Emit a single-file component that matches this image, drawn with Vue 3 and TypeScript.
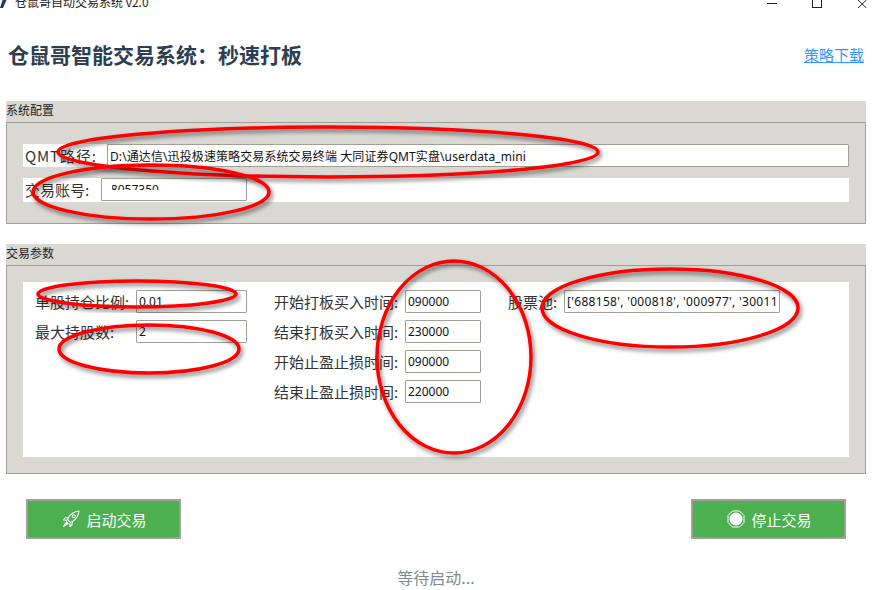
<script setup lang="ts">
import { ref } from 'vue'
const qmtPath = ref('D:\\通达信\\迅投极速策略交易系统交易终端 大同证券QMT实盘\\userdata_mini')
const leftParams = [
  { label: '单股持仓比例:', value: '0.01' },
  { label: '最大持股数:', value: '2' },
]
const timeParams = [
  { label: '开始打板买入时间:', value: '090000' },
  { label: '结束打板买入时间:', value: '230000' },
  { label: '开始止盈止损时间:', value: '090000' },
  { label: '结束止盈止损时间:', value: '220000' },
]
const pool = "['688158', '000818', '000977', '300115', '002230']"
const marks = [
  { cx: 328, cy: 152, rx: 270, ry: 25 },
  { cx: 151, cy: 192, rx: 118, ry: 27 },
  { cx: 137, cy: 294, rx: 99, ry: 13 },
  { cx: 149, cy: 349, rx: 90, ry: 24 },
  { cx: 454, cy: 357, rx: 77, ry: 96 },
  { cx: 670, cy: 308, rx: 128, ry: 39 },
]
</script>

<template>
  <div class="page">
    <header class="titlebar">
      <svg class="app-icon" width="7" height="8" viewBox="0 0 7 8"><path d="M0 8 L2.5 0 H6.5 L3 8 Z" fill="#1e3a5f" /></svg>
      <span class="app-name">仓鼠哥自动交易系统 v2.0</span>
      <div class="win-ctrls">
        <span class="ctrl min"></span>
        <span class="ctrl max"></span>
        <svg class="ctrl-x" width="11" height="8" viewBox="0 0 11 8"><path d="M1 0 L9.5 8 M9.5 0 L1 8" stroke="#222" stroke-width="1" fill="none" /></svg>
      </div>
    </header>

    <div class="heading">
      <h1>仓鼠哥智能交易系统：秒速打板</h1>
      <a class="link">策略下载</a>
    </div>

    <section class="group config">
      <div class="group-title">系统配置</div>
      <div class="group-box">
        <div class="row-qmt">
          <label class="lbl-qmt">QMT路径:</label>
          <input class="field grow path" :value="qmtPath" />
        </div>
        <div class="row-account">
          <label class="lbl-account">交易账号:</label>
          <div class="account-wrap">
            <input class="field account" value="18057350" />
            <span class="smear smear-low"></span>
            <span class="smear smear-left"></span>
          </div>
        </div>
      </div>
    </section>

    <section class="group params">
      <div class="group-title">交易参数</div>
      <div class="group-box">
        <div class="params-panel">
          <div class="col col-left">
            <div v-for="p in leftParams" :key="p.label" class="param">
              <label>{{ p.label }}</label>
              <input class="field w-left" :value="p.value" />
            </div>
          </div>
          <div class="col col-time">
            <div v-for="p in timeParams" :key="p.label" class="param">
              <label>{{ p.label }}</label>
              <input class="field w-time" :value="p.value" />
            </div>
          </div>
          <div class="col col-pool">
            <div class="param">
              <label>股票池:</label>
              <input class="field w-pool" :value="pool" />
            </div>
          </div>
        </div>
      </div>
    </section>

    <div class="actions">
      <button class="btn">
        <svg width="18" height="18" viewBox="0 0 18 18" fill="none" stroke="#fff" stroke-width="1.1" stroke-linejoin="round">
          <path d="M17 1 C12.5 1.5 9 3.5 6.5 7.5 L5.5 9.5 L8.5 12.5 L10.5 11.5 C14.5 9 16.5 5.5 17 1 Z" />
          <circle cx="11.8" cy="6.2" r="1.5" />
          <path d="M6.5 7.5 L3 8 L1.5 10 L5 10.2 M10.5 11.5 L10 15 L8 16.5 L7.8 13" />
          <path d="M4.5 12 L1.5 16.5 L6 13.5 Z" fill="#fff" />
        </svg>
        <span>启动交易</span>
      </button>
      <button class="btn">
        <svg width="18" height="18" viewBox="0 0 18 18">
          <path d="M5.5 1 H12.5 L17 5.5 V12.5 L12.5 17 H5.5 L1 12.5 V5.5 Z" fill="none" stroke="#fff" stroke-width="1" />
          <circle cx="9" cy="9" r="6.5" fill="#fff" />
        </svg>
        <span>停止交易</span>
      </button>
    </div>

    <div class="status">等待启动...</div>

    <svg class="marks" width="872" height="590" viewBox="0 0 872 590">
      <defs>
        <filter id="mark-shadow" x="-10%" y="-20%" width="120%" height="140%">
          <feDropShadow dx="2" dy="3" stdDeviation="2" flood-color="#000" flood-opacity="0.5" />
        </filter>
      </defs>
      <ellipse v-for="(m, i) in marks" :key="i" :cx="m.cx" :cy="m.cy" :rx="m.rx" :ry="m.ry"
        fill="none" stroke="#f00" stroke-width="3.5" filter="url(#mark-shadow)" />
    </svg>
  </div>
</template>

<style scoped>
.page {
  position: relative;
  width: 872px;
  height: 590px;
  overflow: hidden;
  background: #fff;
  font-family: "Noto Sans CJK SC", "Noto Sans", sans-serif;
  color: #333;
}
.titlebar {
  height: 8px;
  display: flex;
  align-items: flex-end;
  overflow: hidden;
  position: relative;
}
.app-icon { margin-right: 8px; flex: none; }
.app-name {
  font-size: 12px;
  line-height: 14px;
  margin-bottom: -1px;
  color: #222;
  flex: none;
}
.win-ctrls {
  margin-left: auto;
  display: flex;
  align-items: flex-start;
  width: 105px;
  height: 8px;
  gap: 35px;
}
.ctrl { display: block; flex: none; }
.min { width: 10px; height: 1px; background: #222; margin-top: 3px; }
.max { width: 10px; height: 8px; border: 1px solid #222; border-top: 0; box-sizing: border-box; }
.ctrl-x { flex: none; }

.heading {
  display: flex;
  justify-content: space-between;
  align-items: center;
  height: 46px;
  margin-top: 24px;
  padding: 0 8px 0 8px;
}
h1 {
  margin: 0 0 3px;
  font-size: 21px;
  font-weight: 700;
  line-height: 28px;
  color: #2c3e50;
}
.link {
  font-size: 15px;
  color: #3498fb;
  text-decoration: underline;
  line-height: 20px;
}

.group { margin-left: 6px; width: 860px; }
.config { margin-top: 23px; }
.params { margin-top: 20px; }
.group-title {
  background: #d9d8d3;
  height: 21px;
  line-height: 18px;
  font-size: 12px;
  color: #222;
}
.group-box {
  background: #d9d8d3;
  border: 1px solid #a09f98;
  box-sizing: border-box;
  padding-left: 16px;
  padding-right: 16px;
}
.config .group-box { height: 102px; padding-top: 21px; }
.params .group-box { height: 209px; padding-top: 16px; }

.row-qmt { display: flex; height: 23px; }
.lbl-qmt {
  width: 84px;
  background: #fff;
  font-size: 15px;
  letter-spacing: 0.9px;
  line-height: 24px;
  padding-left: 2px;
  box-sizing: border-box;
  flex: none;
}
.row-account {
  display: flex;
  height: 24px;
  margin-top: 11px;
  background: #fff;
}
.lbl-account {
  width: 78px;
  font-size: 15px;
  line-height: 24px;
  padding-left: 2px;
  box-sizing: border-box;
  flex: none;
}
.account-wrap { position: relative; height: 23px; }
.smear { position: absolute; background: #fff; }
.smear-low { left: 1px; top: 12px; width: 100px; height: 10px; }
.smear-left { left: 1px; top: 1px; width: 10px; height: 11px; }
.field {
  display: block;
  box-sizing: border-box;
  height: 23px;
  border: 1px solid #a09f98;
  border-radius: 1px;
  background: #fff;
  padding: 0 2px;
  margin: 0;
  outline: none;
  font-family: "Noto Sans", "Noto Sans CJK SC", sans-serif;
  font-size: 12px;
  color: #111;
}
.grow { flex: 1; min-width: 0; }
.path { letter-spacing: 0.1px; }
.account { width: 146px; }
.params-panel {
  display: flex;
  height: 175px;
  background: #fff;
  padding-top: 8px;
  box-sizing: border-box;
}
.col { display: flex; flex-direction: column; gap: 7px; font-size: 15px; }
.param { display: flex; align-items: center; height: 23px; }
.param label { flex: none; line-height: 23px; color: #333; }
.col-left { width: 251px; padding-left: 12px; box-sizing: border-box; }
.col-left label { width: 101px; }
.col-time { width: 234px; }
.col-time label { width: 131px; }
.col-pool label { width: 56px; }
.w-left { width: 111px; }
.w-time { width: 76px; }
.w-pool { width: 216px; letter-spacing: 0.3px; }

.actions {
  display: flex;
  justify-content: space-between;
  margin: 25px 26px 0;
}
.btn {
  width: 155px;
  height: 40px;
  box-sizing: border-box;
  border: 2px solid #a09f98;
  background: #4caf50;
  color: #fff;
  font-family: "Noto Sans CJK SC", sans-serif;
  font-size: 15px;
  display: flex;
  align-items: center;
  justify-content: center;
  gap: 6px;
  padding: 0 0 0 2px;
}
.status {
  text-align: center;
  margin-top: 27px;
  font-size: 16px;
  line-height: 22px;
  color: #7f8c8d;
}
.marks { position: absolute; left: 0; top: 0; pointer-events: none; }
</style>
